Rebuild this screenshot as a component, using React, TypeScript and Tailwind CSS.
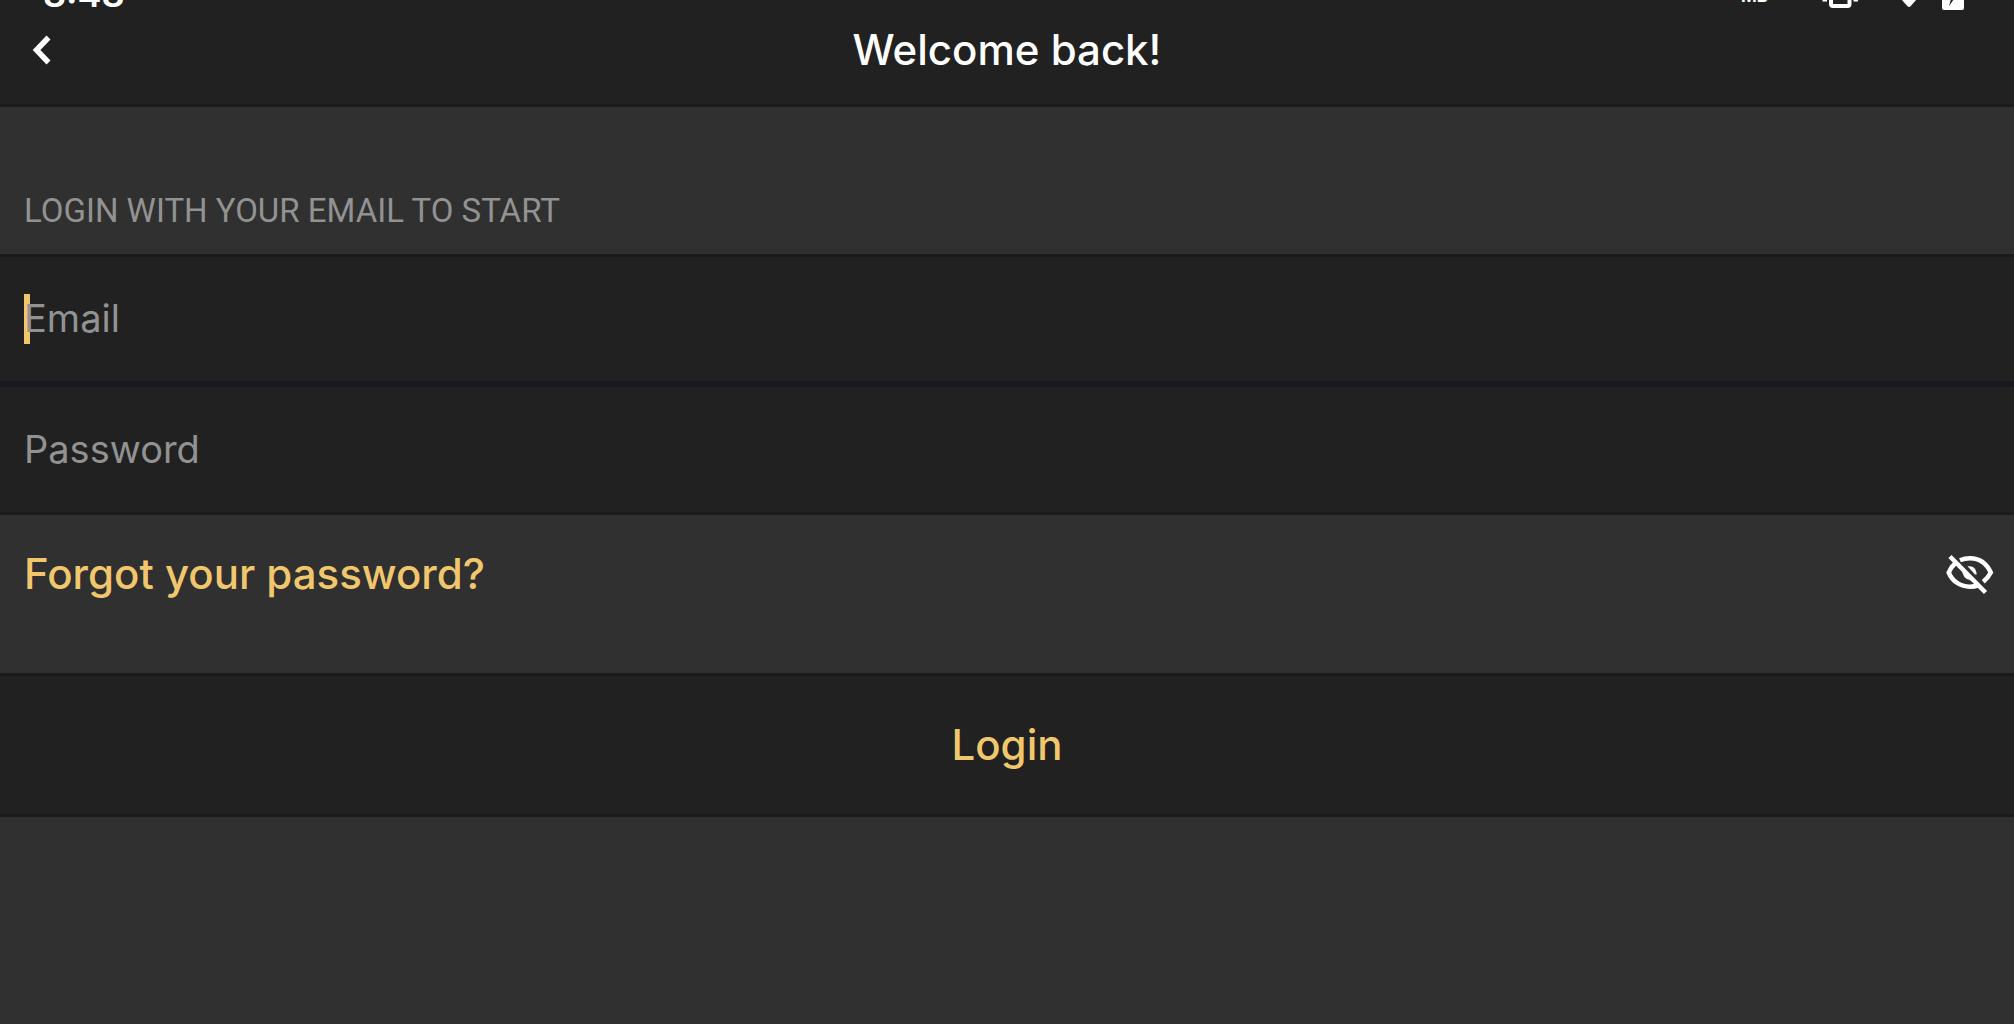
import { useState } from "react";

function StatusBar() {
  return (
    <div className="absolute inset-x-0 top-0 h-3 overflow-hidden pl-[43px] pr-[50px] flex items-end justify-between text-white">
      <span className="text-[36px] leading-[36px] font-semibold">8:48</span>
      <div className="flex items-start h-3">
        <span className="self-end mr-[54px] text-[17px] leading-[32px] font-bold">MB</span>
        {/* Vibrate */}
        <svg className="mr-[43px]" width="36" height="12" viewBox="0 0 36 12" fill="none" stroke="currentColor">
          <path d="M9 -4V4Q9 6 11 6H25.500Q27.500 6 27.500 4V-4" strokeWidth="4" />
          <path d="M0.500 0H5M31.500 0H36" strokeWidth="3" />
        </svg>
        {/* Wifi */}
        <svg className="mr-[25px]" width="16" height="12" viewBox="0 0 16 12" fill="currentColor">
          <path d="M0 -1H16L9.500 6.300Q8 7.500 6.500 6.300Z" />
        </svg>
        {/* Battery */}
        <svg width="22" height="12" viewBox="0 0 22 12">
          <path d="M0 -1H22V8Q22 10 20 10H2Q0 10 0 8Z" fill="currentColor" />
          <path d="M9 -1H12L7 6Z" fill="#212121" />
        </svg>
      </div>
    </div>
  );
}

function EyeOffIcon() {
  return (
    <svg width="50" height="42" viewBox="0 0 50 42" fill="none" stroke="currentColor" strokeWidth="4.5">
      <path d="M15 7.200Q19.500 5.300 25 5.300C34 5.300 41.500 10.500 45.800 19.500Q43 25 38.200 28.800" />
      <path d="M10.500 10Q6 14 3.700 19.500C7.500 28.500 15.500 33.700 25 33.700Q29.500 33.700 33 32.500" />
      <path d="M5 3.500L40.500 39.500" />
      <path d="M22.500 13.300Q31 12 31.700 21.500H30Z" fill="currentColor" stroke="none" />
      <path d="M17 15.500Q17 26 26 27.500L28 26Z" fill="currentColor" stroke="none" />
    </svg>
  );
}

export default function App() {
  const [email, setEmail] = useState("");
  const [password, setPassword] = useState("");
  const [showPassword, setShowPassword] = useState(false);

  return (
    <div className="min-h-screen bg-[#303030] font-['Inter',sans-serif]">
      <header className="relative h-[107px] border-b-3 border-[#1a1a1a] bg-[#212121] px-6 text-white">
        <StatusBar />
        <div className="grid grid-cols-[1fr_auto_1fr] items-center h-[100px]">
          <button type="button" aria-label="Back" className="w-9 h-9 flex items-center justify-center">
            <svg width="20" height="32" viewBox="0 0 20 32" fill="none" stroke="currentColor" strokeWidth="5.500">
              <path d="M16.500 3.500L4.500 16L16.500 28.500" />
            </svg>
          </button>
          <h1 className="text-[42px] leading-[50px] font-medium">Welcome back!</h1>
        </div>
      </header>

      <form onSubmit={(e) => e.preventDefault()}>
        <h2 className="px-6 pt-[84px] pb-[23px] text-[33px] leading-[40px] text-[#929292] font-['Roboto',sans-serif]">
          LOGIN WITH YOUR EMAIL TO START
        </h2>

        <div className="border-y-3 border-[#1a1a1a] bg-[#212121]">
          <div className="relative flex items-center border-b-6 border-[#17191e]">
            {/* Text cursor */}
            {email === "" && <span className="absolute left-6 h-[50px] w-[6px] bg-[#f1c76e]" />}
            <input
              type="email"
              aria-label="Email"
              placeholder="Email"
              value={email}
              onChange={(e) => setEmail(e.target.value)}
              className="relative w-full h-[124px] px-6 pb-[2px] bg-transparent text-[38px] text-white placeholder:text-[#929292] caret-[#f1c76e] outline-none"
            />
          </div>
          <input
            type={showPassword ? "text" : "password"}
            aria-label="Password"
            placeholder="Password"
            value={password}
            onChange={(e) => setPassword(e.target.value)}
            className="block w-full h-[125px] px-6 pb-[2px] bg-transparent text-[38px] text-white placeholder:text-[#929292] caret-[#f1c76e] outline-none"
          />
        </div>

        <div className="flex items-center justify-between pl-6 pr-[19px] pt-[34px] pb-[74px]">
          <a href="#forgot" className="text-[42px] leading-[50px] font-medium text-[#f1c76e]">
            Forgot your password?
          </a>
          <button
            type="button"
            aria-label="Show password"
            className="text-white"
            onClick={() => setShowPassword(!showPassword)}
          >
            <EyeOffIcon />
          </button>
        </div>

        <button
          type="submit"
          className="w-full h-[144px] border-y-3 border-[#1a1a1a] bg-[#212121] text-[42px] leading-[50px] font-medium text-[#f1c76e]"
        >
          Login
        </button>
      </form>
    </div>
  );
}
